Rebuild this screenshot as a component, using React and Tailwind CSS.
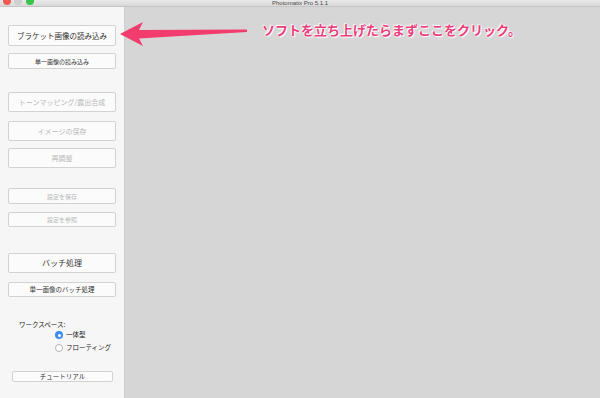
import React from "react";

const jp = { fontFamily: '"Noto Sans CJK JP", "Noto Sans", sans-serif' };

function Btn({ children, h, mt, disabled, text = "text-[7px]", w = "w-[108px]", ml = "ml-2" }) {
  return (
    <div
      className={`${w} ${ml} ${h} ${mt} flex items-center justify-center rounded-[2px] border border-[#d2d2d2] bg-[#fbfbfb] ${text} ${disabled ? "text-[#b9b9b9]" : "text-[#333]"}`}
    >
      {children}
    </div>
  );
}

export default function App() {
  return (
    <div className="relative w-[600px] h-[398px] overflow-hidden bg-[#d6d6d6]" style={jp}>
      {/* title bar */}
      <div className="relative h-[7px] bg-gradient-to-b from-[#e9e9e9] to-[#d9d9d9] border-b border-[#c4c4c4] flex items-center justify-center">
        <div className="absolute left-[3px] top-[-3px] flex gap-[2px]">
          <div className="w-[8px] h-[8px] rounded-full bg-[#f25a52]" />
          <div className="w-[8px] h-[8px] rounded-full bg-[#cfcfcf] ml-[1px]" />
          <div className="w-[8px] h-[8px] rounded-full bg-[#37c647] ml-[2px]" />
        </div>
        <span className="text-[6px] leading-none text-[#4a4a4a] -mt-[1px]" style={{ fontFamily: '"Liberation Sans", sans-serif' }}>
          Photomatix Pro 5.1.1
        </span>
      </div>
      <div className="flex h-[391px]">
        {/* sidebar */}
        <div className="w-[125px] h-full bg-[#f6f6f6] border-r border-[#d0d0d0] flex flex-col">
          <Btn h="h-[21px]" mt="mt-[18px]" text="text-[7.5px]">ブラケット画像の読み込み</Btn>
          <Btn h="h-[16px]" mt="mt-[7px]" text="text-[6px]">単一画像の読み込み</Btn>
          <Btn h="h-[20px]" mt="mt-[23px]" disabled>トーンマッピング/露出合成</Btn>
          <Btn h="h-[20px]" mt="mt-[9px]" disabled>イメージの保存</Btn>
          <Btn h="h-[20px]" mt="mt-[7px]" disabled>再調整</Btn>
          <Btn h="h-[16px]" mt="mt-[20px]" disabled text="text-[6px]">設定を保存</Btn>
          <Btn h="h-[15px]" mt="mt-[8px]" disabled text="text-[6px]">設定を参照</Btn>
          <Btn h="h-[20px]" mt="mt-[26px]" text="text-[8px]">バッチ処理</Btn>
          <Btn h="h-[15px]" mt="mt-[9px]" text="text-[6.5px]">単一画像のバッチ処理</Btn>
          <div className="ml-[19px] mt-[23px] text-[6.5px] leading-[8px] text-[#222]">ワークスペース:</div>
          <div className="ml-[55px] mt-[2px] flex items-center gap-[3px] text-[6.5px] text-[#222] h-[10px]">
            <div className="w-[8px] h-[8px] rounded-full bg-[#3d8ef0] flex items-center justify-center">
              <div className="w-[3px] h-[3px] rounded-full bg-white" />
            </div>
            一体型
          </div>
          <div className="ml-[55px] mt-[3px] flex items-center gap-[3px] text-[6.5px] text-[#222] h-[10px]">
            <div className="w-[8px] h-[8px] rounded-full border border-[#b5b5b5] bg-white" />
            フローティング
          </div>
          <Btn h="h-[11px]" mt="mt-[18px]" w="w-[101px]" ml="ml-[12px]" text="text-[6.5px]">チュートリアル</Btn>
        </div>
        <div className="flex-1" />
      </div>

      {/* annotation arrow */}
      <svg className="absolute left-0 top-0" width="600" height="398" viewBox="0 0 600 398">
        <polygon
          points="120,34 143,22 139,30 247,29.5 247,32 139,38.5 143,46"
          fill="#f23c6d"
        />
      </svg>
      <div
        className="absolute left-[262px] top-[21px] text-[13px] font-bold leading-[18px] text-[#ea3f7c] tracking-[0px] [text-shadow:0_0_1px_#fff,0_0_1px_#fff,1px_1px_1px_#fff,-1px_-1px_1px_#fff]"
      >
        ソフトを立ち上げたらまずここをクリック。
      </div>
    </div>
  );
}
